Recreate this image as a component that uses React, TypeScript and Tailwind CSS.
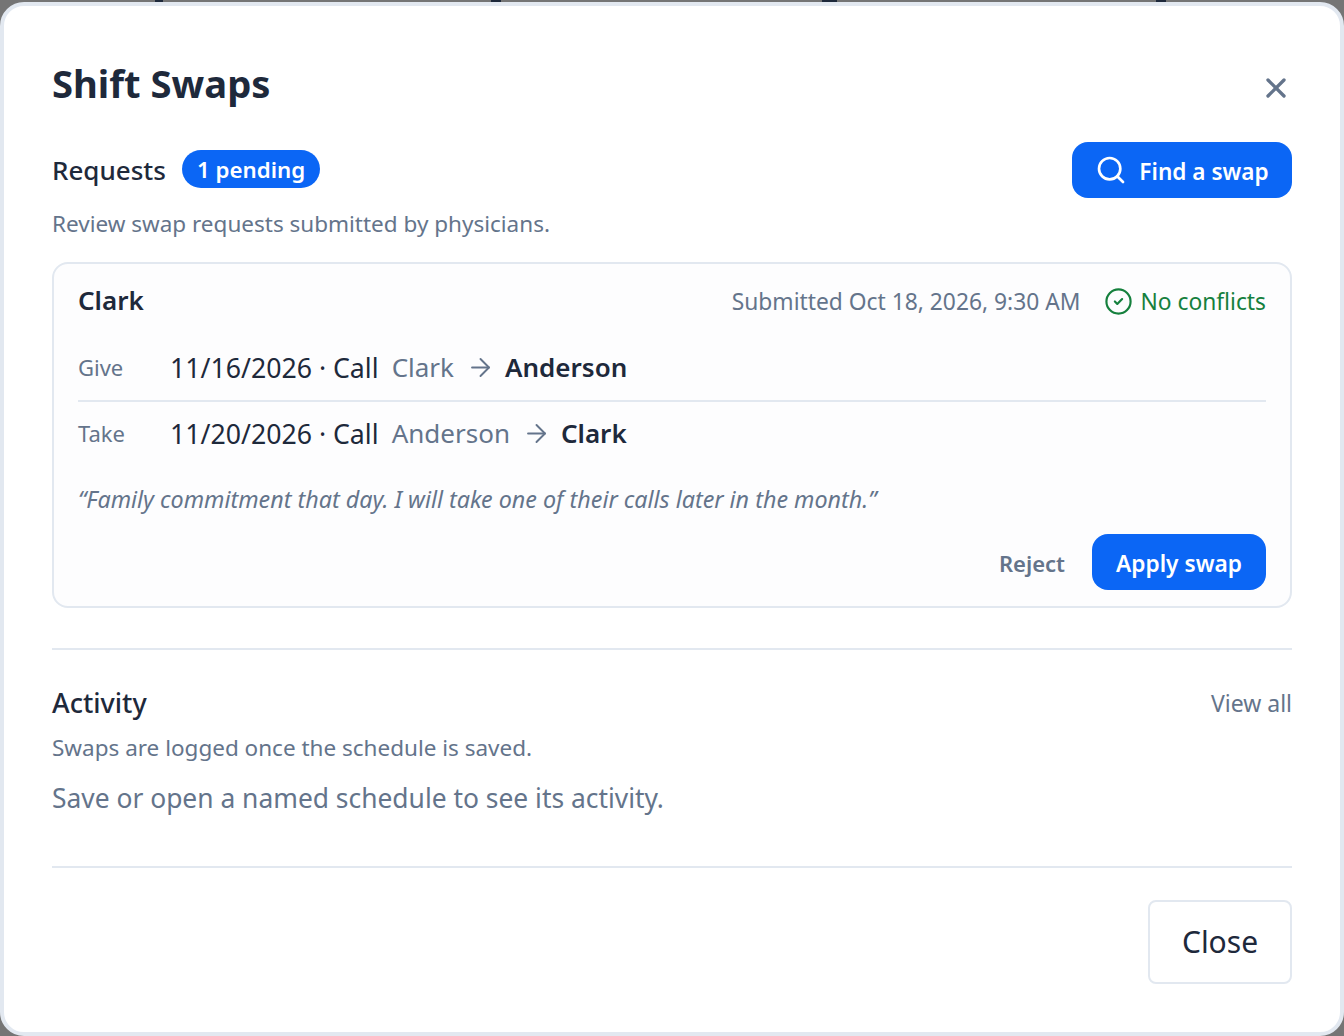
import React from 'react';
import { Search, X, CircleCheck, ArrowRight } from 'lucide-react';

const SwapRow = ({ label, date, from, to, last }: { label: string; date: string; from: string; to: string; last?: boolean }) => (
  <div className={`flex items-center ${last ? 'h-[64px]' : 'h-[66px] border-b-2 border-[#e2e8f0]'}`}>
    <span className="w-[92px] text-[22px] text-[#64748b]">{label}</span>
    <span className="text-[26.7px] text-[#1e293b]">{date}</span>
    <span className="ml-[13px] text-[26px] text-[#64748b]">{from}</span>
    <ArrowRight size={29} strokeWidth={1.6} className="ml-[12px] mr-[10px] text-[#64748b]" />
    <span className="text-[26px] font-semibold text-[#1e293b]">{to}</span>
  </div>
);

export default function App() {
  return (
    <div className="h-[1036px] bg-[#757575] overflow-hidden font-['Noto_Sans',sans-serif]">
      {/* bits of the page behind the dialog */}
      <div className="h-[2px] flex">
        <div className="ml-[155px] w-[8px] bg-[#1e293b]" />
        <div className="ml-[328px] w-[10px] bg-[#1e293b]" />
        <div className="ml-[321px] w-[15px] bg-[#1e293b]" />
        <div className="ml-[319px] w-[10px] bg-[#1e293b]" />
      </div>
      <div className="h-[1034px] bg-white border-4 border-[#e2e8f0] rounded-[24px] px-[48px] pt-[48px] flex flex-col">
        <header className="flex justify-between items-center h-[60px]">
          <h1 className="text-[38.2px] font-bold text-[#1e293b]">Shift Swaps</h1>
          <button className="text-[#64748b] mt-[8px]"><X size={32} strokeWidth={2.5} /></button>
        </header>

        <section className="mt-[28px]">
          <div className="flex justify-between items-center h-[56px]">
            <div className="flex items-center gap-[16px]">
              <h2 className="text-[26px] font-medium text-[#1e293b]">Requests</h2>
              <span className="mb-[2px] pt-[1px] bg-[#0b66f5] text-white text-[22.3px] font-semibold rounded-full px-[15px] h-[38px] flex items-center">1 pending</span>
            </div>
            <button className="bg-[#0b66f5] text-white rounded-[16px] h-[56px] w-[220px] flex items-center justify-center gap-[12px] text-[22.6px] font-semibold">
              <Search size={32} strokeWidth={2} />
              <span className="mt-[3px]">Find a swap</span>
            </button>
          </div>
          <p className="mt-[9px] text-[22.5px] text-[#64748b]">Review swap requests submitted by physicians.</p>

          <div className="mt-[21px] h-[346px] bg-[#fdfdfe] border-2 border-[#e2e8f0] rounded-[16px] px-[24px] pt-[18px]">
            <div className="flex justify-between items-center h-[40px]">
              <span className="mb-[2px] text-[26px] font-semibold text-[#1e293b]">Clark</span>
              <div className="flex items-center">
                <span className="text-[22.8px] text-[#64748b]">Submitted Oct 18, 2026, 9:30 AM</span>
                <CircleCheck size={29} strokeWidth={1.8} className="ml-[24px] text-[#15803d]" />
                <span className="ml-[7px] text-[22.8px] text-[#15803d]">No conflicts</span>
              </div>
            </div>
            <div className="mt-[14px]">
              <SwapRow label="Give" date="11/16/2026 · Call" from="Clark" to="Anderson" />
              <SwapRow label="Take" date="11/20/2026 · Call" from="Anderson" to="Clark" last />
            </div>
            <p className="mt-[16px] text-[23.3px] italic text-[#64748b]">“Family commitment that day. I will take one of their calls later in the month.”</p>
            <div className="mt-[17px] flex justify-end items-center gap-[27px]">
              <button className="pt-[4px] text-[22px] font-semibold text-[#64748b]">Reject</button>
              <button className="pt-[4px] bg-[#0b66f5] text-white rounded-[16px] h-[56px] w-[174px] text-[22.7px] font-semibold">Apply swap</button>
            </div>
          </div>
        </section>

        <section className="mt-[40px] border-t-2 border-[#e2e8f0] pt-[33px]">
          <div className="flex justify-between items-center">
            <h2 className="text-[27px] font-medium text-[#1e293b]">Activity</h2>
            <button className="text-[23px] text-[#64748b]">View all</button>
          </div>
          <p className="mt-[8px] text-[22.5px] text-[#64748b]">Swaps are logged once the schedule is saved.</p>
          <p className="mt-[14px] text-[26.4px] text-[#64748b]">Save or open a named schedule to see its activity.</p>
        </section>

        <footer className="mt-[47px] border-t-2 border-[#e2e8f0] pt-[32px] flex justify-end">
          <button className="w-[144px] h-[84px] border-2 border-[#e2e8f0] rounded-[8px] text-[30px] text-[#1e293b]">Close</button>
        </footer>
      </div>
    </div>
  );
}
